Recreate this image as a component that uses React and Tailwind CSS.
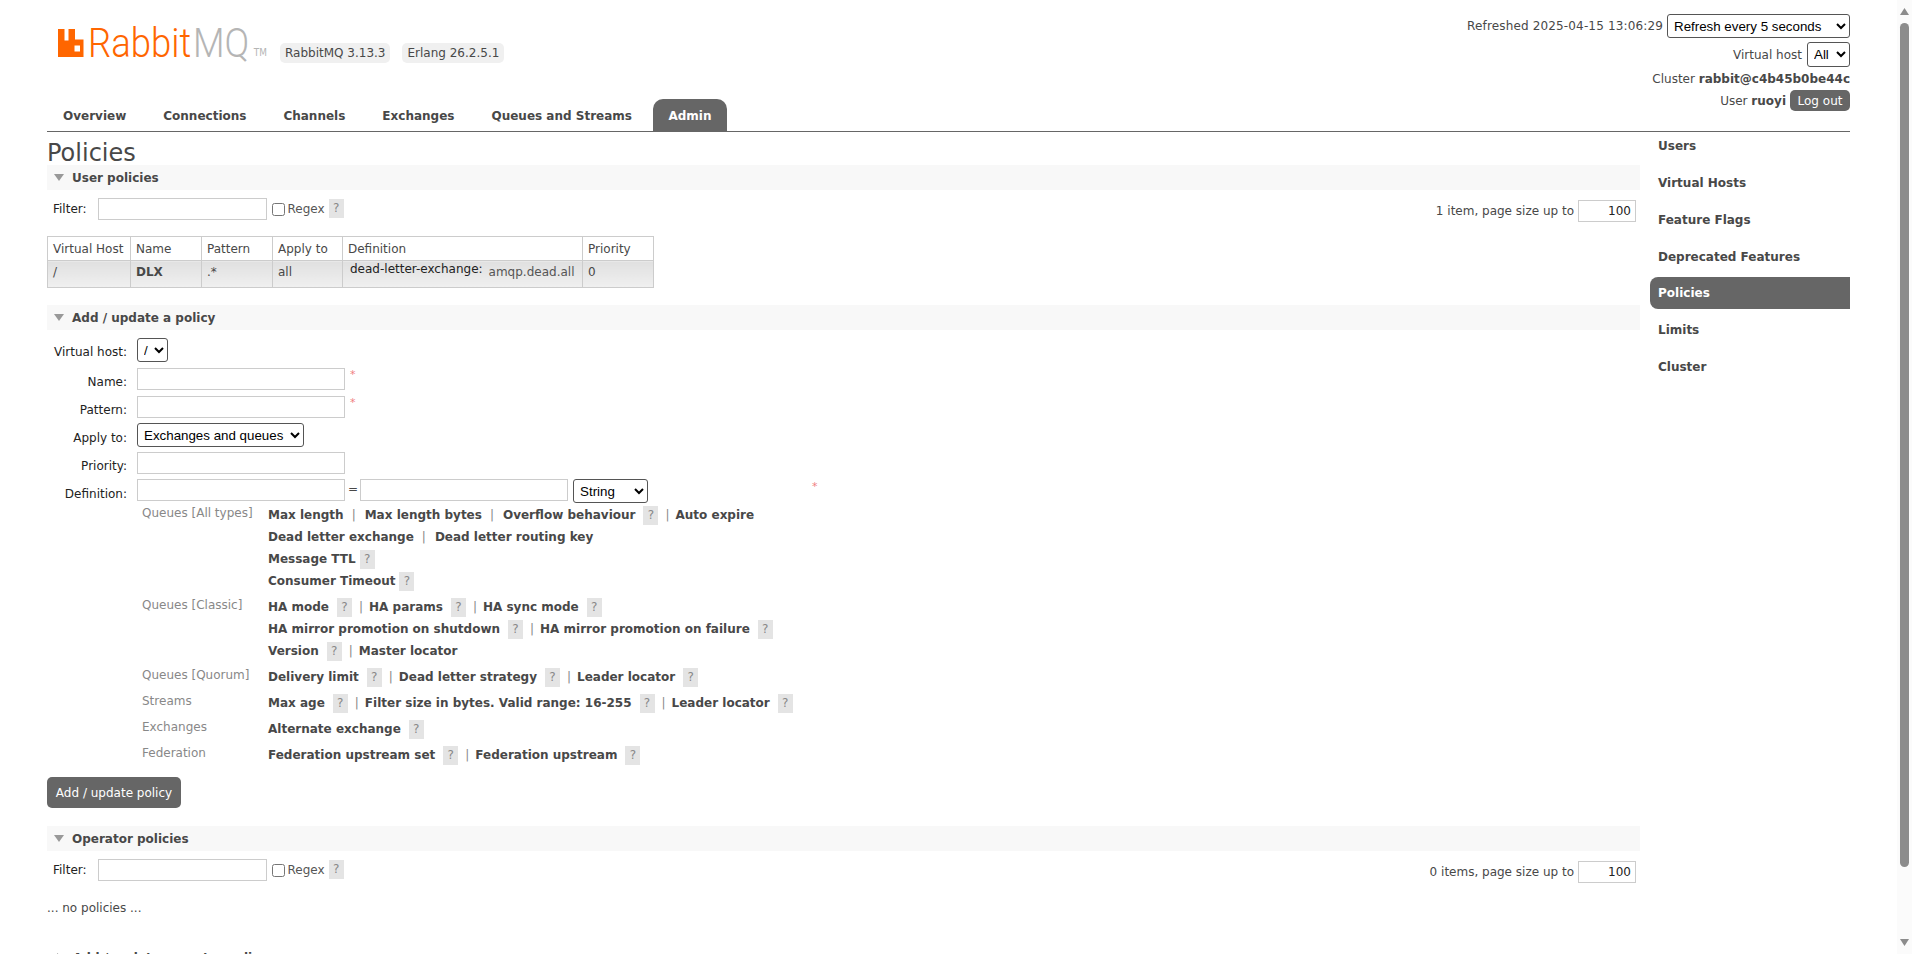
import React from 'react';

const tabs = ['Overview', 'Connections', 'Channels', 'Exchanges', 'Queues and Streams'];

const sideLinks = [
    { name: 'Users', cls: 'mb-[11px]' },
    { name: 'Virtual Hosts', cls: 'mb-[11px]' },
    { name: 'Feature Flags', cls: 'mb-[11px]' },
    { name: 'Deprecated Features', cls: 'mb-[7px]' },
    { name: 'Policies', active: true, cls: 'mb-[8px]' },
    { name: 'Limits', cls: 'mb-[11px]' },
    { name: 'Cluster', cls: '' },
];

// [name, hasHelp, tight help gap] per line, per group
const argGroups = [
    {
        label: 'Queues [All types]',
        lines: [
            [['Max length'], ['Max length bytes'], ['Overflow behaviour', true], ['Auto expire']],
            [['Dead letter exchange'], ['Dead letter routing key']],
            [['Message TTL', true, true]],
            [['Consumer Timeout', true, true]],
        ],
    },
    {
        label: 'Queues [Classic]',
        lines: [
            [['HA mode', true], ['HA params', true], ['HA sync mode', true]],
            [['HA mirror promotion on shutdown', true], ['HA mirror promotion on failure', true]],
            [['Version', true], ['Master locator']],
        ],
    },
    {
        label: 'Queues [Quorum]',
        lines: [[['Delivery limit', true], ['Dead letter strategy', true], ['Leader locator', true]]],
    },
    {
        label: 'Streams',
        lines: [[['Max age', true], ['Filter size in bytes. Valid range: 16-255', true], ['Leader locator', true]]],
    },
    { label: 'Exchanges', lines: [[['Alternate exchange', true]]] },
    { label: 'Federation', lines: [[['Federation upstream set', true], ['Federation upstream', true]]] },
];

const selectCls = "h-[24px] border border-[#555] rounded-[3px] bg-white text-black text-[13.33px] font-['Liberation_Sans',sans-serif]";
const inputCls = 'h-[22px] border border-[#ccc] bg-white';

function Help() {
    return (
        <span className="inline-flex h-[19px] w-[15px] shrink-0 items-center justify-center bg-[#e4e4e4] text-[#888]">?</span>
    );
}

function SectionBar({ title, collapsed }) {
    return (
        <div className={`flex h-[25px] items-center pl-[7px] font-bold text-[#484848] ${collapsed ? '' : 'bg-[#f8f8f8]'}`}>
            {collapsed ? (
                <span className="ml-[3px] mr-[9px] h-0 w-0 border-y-[5px] border-l-[7px] border-y-transparent border-l-[#999]" />
            ) : (
                <span className="mr-[8px] h-0 w-0 border-x-[5.5px] border-t-[7px] border-x-transparent border-t-[#999]" />
            )}
            {title}
        </div>
    );
}

function FilterRow({ count }) {
    return (
        <div className="mt-[7px] flex h-[24px] items-center pl-[6px]">
            <span className="text-[#222]">Filter:</span>
            <input className={`${inputCls} ml-[11px] w-[169px]`} />
            <input type="checkbox" className="ml-[5px] h-[13px] w-[13px]" />
            <span className="mb-[1px] ml-[3px] text-[#555]">Regex</span>
            <span className="mb-[2px] ml-[4px] flex"><Help /></span>
            <span className="ml-auto mt-[3px] text-[#484848]">{count}, page size up to</span>
            <input
                defaultValue="100"
                className={`${inputCls} ml-[4px] mr-[4px] mt-[4px] w-[58px] pr-[4px] text-right text-[12px] text-[#222]`}
            />
        </div>
    );
}

function FormRow({ label, rowCls, labelCls = 'pt-[1px]', children }) {
    return (
        <div className={`flex ${rowCls}`}>
            <div className={`w-[80px] text-right leading-[26px] text-[#222] ${labelCls}`}>{label}</div>
            <div className="ml-[10px] flex flex-1 items-start">{children}</div>
        </div>
    );
}

function Star({ className }) {
    return <span className={`text-[11px] leading-[14px] text-[#f08080] ${className}`}>*</span>;
}

function ArgLine({ items }) {
    return (
        <div className="flex h-[22px] items-center">
            {items.map(([name, help, tight], i) => (
                <React.Fragment key={name}>
                    {i > 0 && (
                        <span className={`text-[#888] ${items[i - 1][1] ? 'ml-[7px] mr-[6px]' : 'ml-[8px] mr-[9px]'}`}>|</span>
                    )}
                    <span className="whitespace-nowrap font-bold text-[#484848]">{name}</span>
                    {help && <span className={`flex ${tight ? 'ml-[4px]' : 'ml-[8px]'}`}><Help /></span>}
                </React.Fragment>
            ))}
        </div>
    );
}

function Logo() {
    return (
        <div className="flex h-[40px] w-[205px] items-center">
            <svg width="27" height="28" viewBox="0 0 27 28" className="shrink-0">
                <path
                    fill="#f60"
                    fillRule="evenodd"
                    d="M1 0h6.5v11.5h4V0H18v10.5h8.5V28H1z M17.5 16.5v6h5.5v-6z"
                />
            </svg>
            <div className="ml-[4px] flex origin-left scale-x-[0.89] items-center whitespace-nowrap font-['Roboto',sans-serif] text-[41px] font-light leading-none">
                <span className="text-[#f60]">Rabbit</span>
                <span className="ml-[2px] text-[#b5b5b5]">MQ</span>
                <span className="ml-[5px] mt-[20px] font-['DejaVu_Sans',sans-serif] text-[10px] font-normal text-[#b5b5b5]">TM</span>
            </div>
        </div>
    );
}

function Header() {
    return (
        <div className="flex h-[132px] flex-col border-b border-[#666]">
            <div className="flex h-[99px] items-start justify-between">
                <div className="flex items-start pl-[10px] pt-[23px]">
                    <Logo />
                    <div className="ml-[18px] mt-[20px] flex gap-[12px] text-[#484848]">
                        <span className="rounded-[5px] bg-[#f0f0f0] px-[5px] py-[1px]">RabbitMQ 3.13.3</span>
                        <span className="rounded-[5px] bg-[#f0f0f0] px-[5px] py-[1px]">Erlang 26.2.5.1</span>
                    </div>
                </div>
                <div className="flex flex-col items-end pt-[14px] text-[#484848]">
                    <div className="flex h-[24px] items-center gap-[4px]">
                        <span className="tracking-[0.15px]">Refreshed 2025-04-15 13:06:29</span>
                        <select className={`${selectCls} w-[183px] pl-[2px]`} defaultValue="5">
                            <option value="5">Refresh every 5 seconds</option>
                        </select>
                    </div>
                    <div className="mt-[4px] flex h-[25px] items-center gap-[5px]">
                        Virtual host
                        <select className={`${selectCls} h-[25px] w-[43px] pl-[2px]`}>
                            <option>All</option>
                        </select>
                    </div>
                    <div className="mt-[4px] h-[16px] leading-[16px]">
                        Cluster <b>rabbit@c4b45b0be44c</b>
                    </div>
                    <div className="mt-[3px] flex h-[21px] items-center gap-[4px]">
                        <span>User <b>ruoyi</b></span>
                        <span className="flex h-[21px] w-[60px] items-center justify-center rounded-[5px] bg-[#666] text-white">Log out</span>
                    </div>
                </div>
            </div>
            <div className="flex h-[32px] items-stretch font-bold text-[#484848]">
                {tabs.map((t) => (
                    <span key={t} className="mr-[5px] flex items-center px-[16px] pt-[1px]">{t}</span>
                ))}
                <span className="flex items-center rounded-t-[10px] bg-[#666] px-[15.5px] pt-[1px] text-white">Admin</span>
            </div>
        </div>
    );
}

function PoliciesTable() {
    const th = 'border border-[#ccc] px-[5px] text-left font-normal text-[#484848] whitespace-nowrap';
    const td = 'border border-[#ccc] bg-gradient-to-b from-[#e0e0e0] to-[#f0f0f0] px-[5px] text-[#484848] align-top pt-[2px] whitespace-nowrap';
    return (
        <table className="mt-[15px] w-[606px] table-fixed border-collapse">
            <colgroup>
                <col className="w-[83px]" />
                <col className="w-[71px]" />
                <col className="w-[71px]" />
                <col className="w-[70px]" />
                <col className="w-[240px]" />
                <col className="w-[71px]" />
            </colgroup>
            <thead>
                <tr className="h-[24px]">
                    {['Virtual Host', 'Name', 'Pattern', 'Apply to', 'Definition', 'Priority'].map((h) => (
                        <th key={h} className={th}>{h}</th>
                    ))}
                </tr>
            </thead>
            <tbody>
                <tr className="h-[27px]">
                    <td className={td}>/</td>
                    <td className={`${td} font-bold text-[#222]`}>DLX</td>
                    <td className={td}>.*</td>
                    <td className={td}>all</td>
                    <td className={td}>
                        <span className="ml-[2px] inline-block -translate-y-[3px] text-[#222]">dead-letter-exchange:</span>
                        <span className="ml-[6px] text-[#555]">amqp.dead.all</span>
                    </td>
                    <td className={td}>0</td>
                </tr>
            </tbody>
        </table>
    );
}

function AddPolicyForm() {
    return (
        <div className="mt-[8px]">
            <FormRow label="Virtual host:" rowCls="h-[30px]">
                <select className={`${selectCls} w-[31px] pl-[2px]`}><option>/</option></select>
            </FormRow>
            <FormRow label="Name:" rowCls="h-[28px]">
                <input className={`${inputCls} w-[208px]`} />
                <Star className="ml-[5px]" />
            </FormRow>
            <FormRow label="Pattern:" rowCls="h-[27px]">
                <input className={`${inputCls} w-[208px]`} />
                <Star className="ml-[5px]" />
            </FormRow>
            <FormRow label="Apply to:" rowCls="h-[29px]" labelCls="pt-[2px]">
                <select className={`${selectCls} w-[167px] pl-[2px]`}><option>Exchanges and queues</option></select>
            </FormRow>
            <FormRow label="Priority:" rowCls="h-[27px]">
                <input className={`${inputCls} w-[208px]`} />
            </FormRow>
            <FormRow label="Definition:" rowCls="h-[25px]" labelCls="pt-[2px]">
                <input className={`${inputCls} w-[208px]`} />
                <span className="ml-[3px] mr-[2px] leading-[20px] text-[#484848]">=</span>
                <input className={`${inputCls} w-[208px]`} />
                <select className={`${selectCls} ml-[5px] w-[75px] pl-[2px]`}><option>String</option></select>
                <Star className="ml-[164px] mt-[1px]" />
            </FormRow>
            <div className="ml-[95px] flex flex-col gap-[4px]">
                {argGroups.map((g) => (
                    <div key={g.label} className="flex">
                        <div className="w-[126px] shrink-0 pt-[1px] leading-[16px] text-[#888]">{g.label}</div>
                        <div>
                            {g.lines.map((items) => (
                                <ArgLine key={items[0][0]} items={items} />
                            ))}
                        </div>
                    </div>
                ))}
            </div>
            <button className="mt-[11px] block h-[31px] w-[134px] rounded-[5px] bg-[#666] text-white">
                Add / update policy
            </button>
        </div>
    );
}

function Sidebar() {
    return (
        <div className="ml-[10px] w-[200px] shrink-0 pt-[1px] font-bold text-[#484848]">
            {sideLinks.map((l) => (
                <div
                    key={l.name}
                    className={
                        l.active
                            ? `flex h-[32px] items-center rounded-l-[8px] bg-[#666] pl-[8px] text-white ${l.cls}`
                            : `flex h-[26px] items-center pl-[8px] ${l.cls}`
                    }
                >
                    {l.name}
                </div>
            ))}
        </div>
    );
}

function Scrollbar() {
    return (
        <div className="flex h-full w-[15px] shrink-0 flex-col items-center bg-[#fbfbfb]">
            <svg width="9" height="7" viewBox="0 0 9 7" className="mt-[8px] shrink-0"><path d="M4.5 0L9 7H0z" fill="#8c8c8c" /></svg>
            <div className="mb-[72px] mt-[8px] w-[9px] flex-1 rounded-full bg-[#8c8c8c]" />
            <svg width="9" height="7" viewBox="0 0 9 7" className="mb-[8px] shrink-0"><path d="M4.5 7L9 0H0z" fill="#8c8c8c" /></svg>
        </div>
    );
}

export default function App() {
    return (
        <div className="flex h-[954px] w-[1912px] overflow-hidden bg-white font-['DejaVu_Sans',sans-serif] text-[12px] text-[#484848]">
            <div className="flex-1 overflow-hidden px-[47px]">
                <Header />
                <div className="flex">
                    <div className="flex-1">
                        <h1 className="h-[33px] text-[24px] leading-[42px] text-[#484848]">Policies</h1>
                        <SectionBar title="User policies" />
                        <FilterRow count="1 item" />
                        <PoliciesTable />
                        <div className="mt-[17px]"><SectionBar title="Add / update a policy" /></div>
                        <AddPolicyForm />
                        <div className="mt-[18px]"><SectionBar title="Operator policies" /></div>
                        <FilterRow count="0 items" />
                        <p className="mt-[17px] text-[#484848]">... no policies ...</p>
                        <div className="mt-[28px]"><SectionBar title="Add / update operator policy" collapsed /></div>
                    </div>
                    <Sidebar />
                </div>
            </div>
            <Scrollbar />
        </div>
    );
}
